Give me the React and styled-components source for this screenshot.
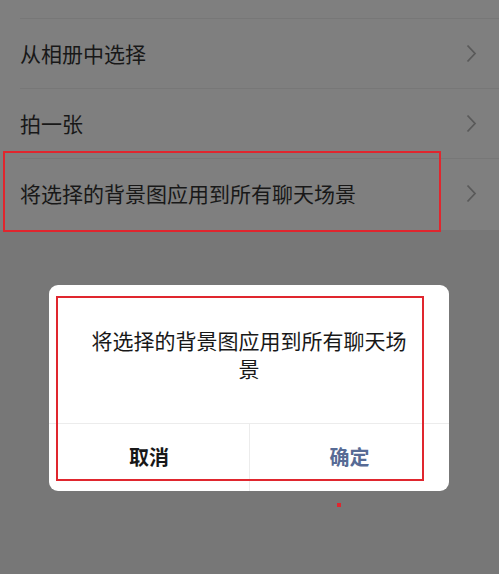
import React from "react";
import styled, { createGlobalStyle } from "styled-components";

const Global = createGlobalStyle`
  html, body { margin: 0; padding: 0; }
  body {
    background: #777777;
    font-family: "Noto Sans CJK SC", "Noto Sans", sans-serif;
    width: 499px;
    height: 574px;
    overflow: hidden;
  }
`;

const Screen = styled.div`
  position: relative;
  width: 499px;
  height: 574px;
  background: #777777;
`;

const List = styled.div`
  background: #7f7f7f;
  display: flex;
  flex-direction: column;
`;

const CutRow = styled.div`
  height: ${(p) => p.$h}px;
`;

const Row = styled.div`
  height: 70px;
  margin-left: 20px;
  padding-right: 22px;
  border-top: 1px solid #777777;
  display: flex;
  align-items: center;
  justify-content: space-between;
  box-sizing: border-box;
`;

const RowLabel = styled.span`
  font-size: 21px;
  color: #181818;
  line-height: 1;
`;

const Chevron = () => (
  <svg width="11" height="19" viewBox="0 0 11 19">
    <polyline points="1.5,1.5 9,9.5 1.5,17.5" fill="none" stroke="#5a5a5a" strokeWidth="1.8" />
  </svg>
);

const Mark = styled.div`
  position: absolute;
  border: 2px solid #e0262e;
  box-sizing: border-box;
  left: ${(p) => p.$x}px;
  top: ${(p) => p.$y}px;
  width: ${(p) => p.$w}px;
  height: ${(p) => p.$h}px;
`;

const Dot = styled.div`
  position: absolute;
  left: 337px;
  top: 503px;
  width: 4px;
  height: 4px;
  background: #e0262e;
`;

const Dialog = styled.div`
  position: absolute;
  left: 49px;
  top: 285px;
  width: 400px;
  height: 206px;
  background: #ffffff;
  border-radius: 9px;
  display: flex;
  flex-direction: column;
  overflow: hidden;
`;

const Message = styled.div`
  height: 138px;
  padding: 0 34px;
  display: flex;
  align-items: center;
  justify-content: center;
  text-align: center;
  font-size: 21px;
  line-height: 28px;
  color: #181818;
  box-sizing: border-box;
`;

const Buttons = styled.div`
  flex: 1;
  display: grid;
  grid-template-columns: 1fr 1fr;
  border-top: 1px solid #ececec;
`;

const Btn = styled.div`
  display: flex;
  align-items: center;
  justify-content: center;
  font-size: 20px;
  font-weight: 700;
  color: ${(p) => (p.$primary ? "#576b95" : "#181818")};
  & + & {
    border-left: 1px solid #ececec;
  }
  padding-bottom: 2px;
`;

export default function App() {
  const items = ["从相册中选择", "拍一张", "将选择的背景图应用到所有聊天场景"];
  return (
    <Screen>
      <Global />
      <List>
        <CutRow $h={18} />
        {items.map((t) => (
          <Row key={t}>
            <RowLabel>{t}</RowLabel>
            <Chevron />
          </Row>
        ))}
        <CutRow $h={2} />
      </List>
      <Mark $x={3} $y={151} $w={438} $h={81} />
      <Dialog>
        <Message>将选择的背景图应用到所有聊天场景</Message>
        <Buttons>
          <Btn>取消</Btn>
          <Btn $primary>确定</Btn>
        </Buttons>
      </Dialog>
      <Mark $x={56} $y={296} $w={368} $h={185} />
      <Dot />
    </Screen>
  );
}
